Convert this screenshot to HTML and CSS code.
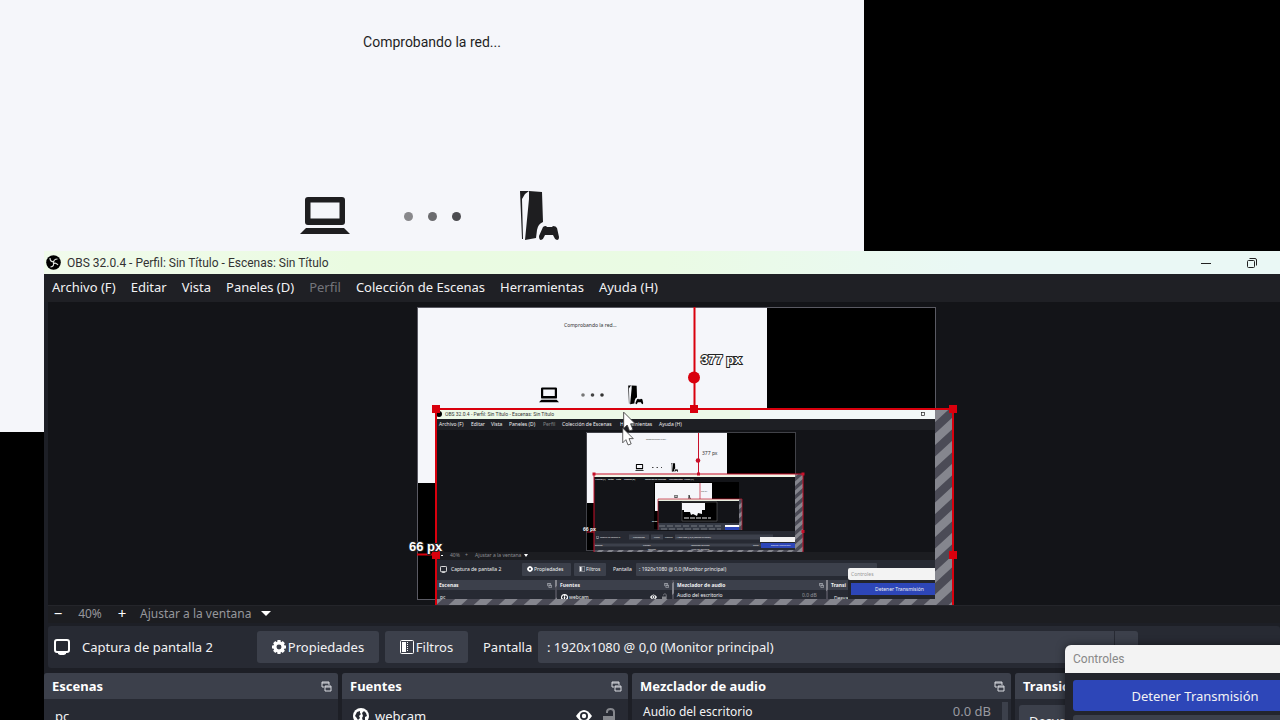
FILE: index.html
```html
<!DOCTYPE html>
<html lang="es">
<head>
<meta charset="utf-8">
<title>OBS 32.0.4</title>
<link rel="stylesheet" href="styles.css">
</head>
<body>
<svg class="defs" aria-hidden="true">
  <defs>
    <symbol id="laptop" viewBox="0 0 50 38">
      <path fill-rule="evenodd" d="M8 0h34q3 0 3 3v22q0 3-3 3H8q-3 0-3-3V3q0-3 3-3zm2.500 5.500v16h29v-16z"/>
      <path d="M6 31h38l6 6H0z"/>
    </symbol>
    <symbol id="console" viewBox="0 0 40 52">
      <path d="M1 1h9L6 4 3 9l1 40H3z"/>
      <path d="M10 1l13 1 1 30q-5 2-6 8l-1 8-11 2L10 9z"/>
      <path d="M24 37q1-1 3-1l1 1h5l1-1q3 0 4 2l2 9q0 3-2 3-2 0-3-3l-1-2h-8l-1 2q-1 3-3 3t-2-4z"/>
    </symbol>
    <symbol id="popout" viewBox="0 0 11 11">
      <path d="M3 6H1V1h7v3M1 2h7M4 5h6v5H4zM4 6h6" fill="none" stroke="#d8dae0"/>
    </symbol>
    <symbol id="monitor" viewBox="0 0 16 16">
      <rect x="1" y="1" width="14" height="12" rx="2" fill="none" stroke="#fff" stroke-width="2"/>
      <path d="M4 14h8v1l-2 1H6l-2-1z" fill="#fff"/>
    </symbol>
    <symbol id="gear" viewBox="0 0 16 16">
      <circle cx="8" cy="8" r="4.700" fill="none" stroke="#fff" stroke-width="3.700"/>
      <path d="M8 0v3M8 13v3M0 8h3M13 8h3M2.500 2.500l2 2M11.500 11.500l2 2M13.500 2.500l-2 2M4.500 11.500l-2 2" stroke="#fff" stroke-width="3.600"/>
    </symbol>
    <symbol id="filters" viewBox="0 0 14 14">
      <rect x=".5" y=".5" width="13" height="13" rx="1" fill="none" stroke="#fff"/>
      <path d="M2 2h4v10H2z" fill="#fff"/>
      <path d="M7.500 2v10" stroke="#fff" stroke-dasharray="1 1"/>
    </symbol>
    <symbol id="globe" viewBox="0 0 16 16">
      <circle cx="8" cy="8" r="8" fill="#fff"/>
      <path d="M2 8l2-4 3-1v2l1 1-2 2 1 2-2 2-2-3zM9 5l2-2 2 2 1 3-2 1v3l-2 1-1-3 1-2z" fill="#272a33"/>
    </symbol>
    <symbol id="eye" viewBox="0 0 16 12">
      <path d="M0 6q8-12 16 0-8 12-16 0z" fill="#fff"/>
      <circle cx="8" cy="6" r="4" fill="#272a33"/><circle cx="8" cy="6" r="2.200" fill="#fff"/>
    </symbol>
    <symbol id="lock" viewBox="0 0 13 16">
      <path d="M4 5V4q0-3 3.500-3T11 4v5" fill="none" stroke="#85878d" stroke-width="2"/>
      <path d="M0 8h12v8H0z" fill="#85878d"/>
    </symbol>
    <symbol id="pointer" viewBox="0 0 12 18">
      <path d="M1 1v14l3-3 2 5 3-1-2-5h4z" fill="#fff" stroke="#444" stroke-width=".8"/>
    </symbol>
    <pattern id="hatch" width="25" height="23" patternUnits="userSpaceOnUse" patternTransform="translate(3 3)">
      <rect width="25" height="23" fill="#4b4b56"/>
      <path d="M0 23L25 0v11.500L12.500 23zM0 0h12.500L0 11.500z" fill="#85868e"/>
    </pattern>
    <pattern id="hatch-small" width="10" height="9" patternUnits="userSpaceOnUse">
      <rect width="10" height="9" fill="#4b4b56"/>
      <path d="M0 9L10 0v4.500L5 9zM0 0h5L0 4.500z" fill="#85868e"/>
    </pattern>
    <clipPath id="canvas-clip"><rect x="418" y="308" width="517" height="291"/></clipPath>
  </defs>
</svg>

<main class="desktop">
  <section class="remote">
    <p class="remote-status">Comprobando la red...</p>
    <div class="remote-link">
      <svg class="laptop"><use href="#laptop"/></svg>
      <div class="dots"><i class="dot dot-a"></i><i class="dot dot-b"></i><i class="dot dot-c"></i></div>
      <svg class="console"><use href="#console"/></svg>
    </div>
  </section>

  <section class="obs">
    <header class="titlebar">
      <svg class="logo" viewBox="0 0 15 15"><circle cx="7.500" cy="7.500" r="7.300" fill="#000"/><path d="M4 3q0 4 4 4M11.500 4q-4 0-4 4M12 10q-2-3-5-1M7.500 7.500q1 4-3 4.500" fill="none" stroke="#dfe3df" stroke-width="1.200"/></svg>
      <h1 class="title">OBS 32.0.4 - Perfil: Sin Título - Escenas: Sin Título</h1>
      <button class="win-btn" aria-label="Minimizar"><svg viewBox="0 0 10 10"><path d="M0 5.500h10" stroke="#222"/></svg></button>
      <button class="win-btn" aria-label="Restaurar"><svg viewBox="0 0 10 10" fill="none" stroke="#222"><rect x=".5" y="2.500" width="7" height="7" rx="1"/><path d="M2.500.5H8q1.500 0 1.500 1.500v5.500"/></svg></button>
    </header>

    <nav class="menu">
      <button>Archivo (F)</button><button>Editar</button><button>Vista</button><button>Paneles (D)</button><button disabled>Perfil</button><button>Colección de Escenas</button><button>Herramientas</button><button>Ayuda (H)</button>
    </nav>

    <div class="preview">
      <svg class="stage" viewBox="400 302 560 303">
        <rect x="417.500" y="307.500" width="518" height="292" fill="#000" stroke="#5a5a63"/>
        <rect x="418" y="308" width="349" height="175" fill="#f5f6fa"/>
        <text class="t5 ink" x="564" y="327">Comprobando la red...</text>
        <use href="#laptop" x="539" y="387" width="20" height="16"/>
        <circle cx="583" cy="395" r="1.800" fill="#777"/><circle cx="592.500" cy="395" r="1.800" fill="#444"/><circle cx="602" cy="395" r="1.800" fill="#333"/>
        <use href="#console" x="627" y="385" width="17" height="20"/>

        <rect x="436" y="409" width="517" height="196" fill="url(#hatch)"/>
        <g clip-path="url(#canvas-clip)">
          <rect x="436" y="410" width="499" height="9" fill="#edf9e8"/>
          <rect x="750" y="410" width="185" height="9" fill="#f2f8f8"/>
          <circle cx="439" cy="414" r="3"/>
          <text class="t5 ink segoe" x="445" y="416">OBS 32.0.4 - Perfil: Sin Título - Escenas: Sin Título</text>
          <rect x="921.500" y="412.500" width="3" height="3" fill="none" stroke="#222" stroke-width=".7"/>
          <rect x="436" y="419" width="499" height="11" fill="#1e1f24"/>
          <g class="t5 pale"><text x="439" y="426">Archivo (F)</text><text x="471" y="426">Editar</text><text x="491" y="426">Vista</text><text x="509" y="426">Paneles (D)</text><text x="543" y="426" opacity=".45">Perfil</text><text x="562" y="426">Colección de Escenas</text><text x="620" y="426">Herramientas</text><text x="659" y="426">Ayuda (H)</text></g>
          <rect x="436" y="430" width="499" height="122" fill="#131418"/>
          <rect x="436" y="552" width="499" height="8" fill="#1c1d21"/>
          <g class="t5 gray"><text x="450" y="557">40%</text><text x="465" y="557">+</text><text x="475" y="557">Ajustar a la ventana</text></g>
          <path d="M524 554h4l-2 3zM441 555h2v1h-2z" fill="#fff"/>
          <rect x="436" y="560" width="499" height="20" fill="#272a33"/>
          <g fill="#3c404b"><rect x="522" y="563" width="49" height="13" rx="1"/><rect x="574" y="563" width="32" height="13" rx="1"/><rect x="636" y="563" width="241" height="13" rx="1"/></g>
          <use href="#monitor" x="440" y="566" width="7" height="7"/>
          <use href="#gear" x="527" y="566" width="6" height="6"/>
          <use href="#filters" x="579" y="566" width="6" height="6"/>
          <g class="t5 pale"><text x="451" y="571">Captura de pantalla 2</text><text x="534" y="571">Propiedades</text><text x="586" y="571">Filtros</text><text x="613" y="571">Pantalla</text><text x="639" y="571">: 1920x1080 @ 0,0 (Monitor principal)</text></g>
          <g fill="#3c404b"><rect x="436" y="580" width="119" height="10"/><rect x="557" y="580" width="115" height="10"/><rect x="674" y="580" width="152" height="10"/><rect x="828" y="580" width="30" height="10"/></g>
          <g fill="#272a33"><rect x="436" y="590" width="119" height="9"/><rect x="557" y="590" width="115" height="9"/><rect x="674" y="590" width="152" height="9"/><rect x="828" y="590" width="30" height="9"/></g>
          <use href="#popout" x="547" y="583" width="5" height="5"/><use href="#popout" x="664" y="583" width="5" height="5"/><use href="#popout" x="819" y="583" width="5" height="5"/>
          <g class="t5 pale bold"><text x="439" y="587">Escenas</text><text x="560" y="587">Fuentes</text><text x="677" y="587">Mezclador de audio</text><text x="831" y="587">Transi</text></g>
          <g class="t5 pale"><text x="440" y="599">pc</text><text x="569" y="599">webcam</text><text x="677" y="597">Audio del escritorio</text><text x="802" y="597" opacity=".5">0.0 dB</text><text x="834" y="600">Desva</text></g>
          <use href="#globe" x="561" y="594" width="7" height="7"/><use href="#eye" x="650" y="594" width="7" height="6"/><use href="#lock" x="662" y="593" width="5" height="7"/>
          <rect x="848" y="568" width="92" height="12" rx="2" fill="#f3f3f3"/><text class="t5" x="851" y="576" fill="#999">Controles</text>
          <rect x="848" y="580" width="92" height="20" fill="#23252c"/><rect x="851" y="583" width="90" height="12" fill="#2d46b8"/><text class="t5 pale" x="875" y="591">Detener Transmisión</text>

          <rect x="586.500" y="432.500" width="209" height="118" fill="#000" stroke="#5a5a63" stroke-width=".7"/>
          <rect x="587" y="433" width="140" height="70" fill="#f5f6fa"/>
          <text class="t2 ink" x="646" y="440">Comprobando la red...</text>
          <use href="#laptop" x="635" y="464" width="9" height="7"/>
          <path d="M652 467.500h10" stroke="#444" stroke-dasharray="1.500 3"/>
          <use href="#console" x="671" y="463" width="7" height="9"/>
          <rect x="594" y="474" width="209" height="78" fill="url(#hatch-small)"/>
          <rect x="594" y="474" width="201" height="3" fill="#f2f6e8"/>
          <rect x="594" y="477" width="201" height="54" fill="#131418"/>
          <g class="t2 pale bold"><text x="595" y="480">Archivo (F)</text><text x="608" y="480">Editar</text><text x="616" y="480">Vista</text><text x="624" y="480">Paneles (D)</text><text x="645" y="480">Colección de Escenas</text><text x="669" y="480">Herramientas</text><text x="684" y="480">Ayuda (H)</text></g>
          <rect x="594" y="531" width="201" height="19" fill="#272a33"/>
          <path d="M629 537h20M651 537h12M675 537h98" stroke="#3c404b" stroke-width="5"/>
          <path d="M594 545h201" stroke="#3c404b" stroke-width="3"/>
          <g class="t2 pale"><text x="600" y="538">Captura de pantalla 2</text><text x="633" y="538">Propiedades</text><text x="654" y="538">Filtros</text><text x="665" y="538">Pantalla</text><text x="676" y="538">: 1920x1080 @ 0,0 (Monitor principal)</text><text x="595" y="546">Escenas</text><text x="643" y="546">Fuentes</text><text x="691" y="546">Mezclador de audio</text><text x="753" y="546">Transi</text><text x="648" y="550">webcam</text><text x="691" y="550">Audio del escritorio</text></g>
          <use href="#monitor" x="596" y="536" width="3" height="3"/>
          <rect x="760" y="537" width="35" height="5" fill="#f3f3f3"/><rect x="761" y="543" width="34" height="5" fill="#2d46b8"/><text class="t2 pale" x="771" y="546">Detener Transmisión</text>

          <path d="M654 482h85v47h-85z" fill="#000"/>
          <path d="M655 483h57v28h-57z" fill="#f5f6fa"/>
          <use href="#laptop" x="674" y="495" width="4" height="3"/><use href="#console" x="688" y="495" width="3" height="4"/>
          <path d="M658 499h84v31h-84z" fill="url(#hatch-small)"/>
          <path d="M658 499h81v2h-81z" fill="#e7eddf"/><path d="M658 501h81v22h-81z" fill="#131418"/><path d="M658 523h81v7h-81z" fill="#343944"/>
          <path d="M659 526h62M661 529h60" stroke="#a6a8af" stroke-width=".6" stroke-dasharray="6 2"/>
          <path d="M725 525h14v2h-14z" fill="#fff"/><path d="M725 527h14v3h-14z" fill="#2d46b8"/>
          <path d="M682 502h35v19h-35z" fill="#000" stroke="#777" stroke-width=".5"/><path d="M682 503h23v7h-3v4l-4-1-1 3-4-2-2 1-1-3h-6v-2h-2z" fill="#f5f6fa"/><path d="M684 518h27" stroke="#777" stroke-width="2" stroke-dasharray="5 1"/>
          <path d="M658 530v-31h84v31M700 499v-16" fill="none" stroke="#c3152b" stroke-width=".7"/>
          <text class="t2 ink" x="701" y="492">377 px</text><text class="t2 pale bold" x="652" y="522">66 px</text>

          <path d="M594 552v-78h209v78M698.500 474v-41" fill="none" stroke="#c8102a"/>
          <circle cx="698" cy="460.500" r="2.300" fill="#c8102a"/>
          <path d="M592.500 472.500h3v3h-3zM697 472.500h3v3h-3zM801.500 472.500h3v3h-3zM801.500 530h3v3h-3z" fill="#c8102a"/>
          <path d="M587 532h7" stroke="#c8102a"/>
          <text class="t5 ink" x="702" y="455">377 px</text>
          <text class="t5 pale bold" x="583" y="531">66 px</text>
        </g>
        <path d="M436 605V409h517v196" fill="none" stroke="#d9000d" stroke-width="2"/>
        <path d="M694.500 307v102M417 554.500h19" stroke="#d9000d" stroke-width="2"/>
        <circle cx="694" cy="377.500" r="6" fill="#d9000d"/>
        <path d="M432 405h8v8h-8zM690 405h8v8h-8zM949 405h8v8h-8zM432 551h8v8h-8zM949 551h8v8h-8z" fill="#d9000d"/>
        <text class="measure" x="701" y="364">377 px</text>
        <text class="measure" x="409" y="551">66 px</text>
        <use href="#pointer" x="621" y="427" width="14" height="19"/>
        <use href="#pointer" x="622" y="411" width="15" height="21"/>
      </svg>
    </div>

    <div class="zoombar">
      <button class="zoom-btn" aria-label="Alejar">−</button><span class="zoom-value">40%</span><button class="zoom-btn" aria-label="Acercar">+</button>
      <button class="zoom-fit">Ajustar a la ventana<i class="caret"></i></button>
    </div>

    <div class="context">
      <svg class="ico16"><use href="#monitor"/></svg>
      <span class="source-name">Captura de pantalla 2</span>
      <button class="tool props"><svg class="ico14"><use href="#gear"/></svg>Propiedades</button>
      <button class="tool filters"><svg class="ico14"><use href="#filters"/></svg>Filtros</button>
      <label class="screen-label" for="screen">Pantalla</label>
      <select class="screen" id="screen"><option>: 1920x1080 @ 0,0 (Monitor principal)</option></select>
    </div>

    <div class="docks">
      <section class="dock"><h2 class="dock-head">Escenas<svg class="popout"><use href="#popout"/></svg></h2><div class="row scene">pc</div></section>
      <section class="dock"><h2 class="dock-head">Fuentes<svg class="popout"><use href="#popout"/></svg></h2><div class="row"><svg class="ico16"><use href="#globe"/></svg><span class="grow">webcam</span><svg class="eye"><use href="#eye"/></svg><svg class="lock"><use href="#lock"/></svg></div></section>
      <section class="dock"><h2 class="dock-head">Mezclador de audio<svg class="popout"><use href="#popout"/></svg></h2><div class="mixer"><span class="grow">Audio del escritorio</span><span class="db">0.0 dB</span><i class="scroll"></i></div></section>
      <section class="dock"><h2 class="dock-head">Transiciones</h2><button class="transition">Desvanecimiento</button></section>
    </div>
  </section>

  <section class="controls">
    <h2 class="controls-title">Controles</h2>
    <div class="controls-body"><button class="stop">Detener Transmisión</button><button class="next" aria-label="Iniciar grabación"></button></div>
  </section>
</main>
</body>
</html>
```
FILE: styles.css
```css
* { box-sizing: border-box; }
body { margin: 0; background: #000; overflow: hidden; font-family: "Noto Sans", "Open Sans", sans-serif; font-size: 13px; color: #f2f2f4; }
h1, h2, p { margin: 0; font-weight: 400; }
button, select { font: inherit; color: inherit; border: 0; padding: 0; background: none; }
svg { flex: none; display: block; }
.defs { position: absolute; width: 0; height: 0; }
.desktop { position: relative; height: 100vh; overflow: hidden; }

.remote { position: absolute; left: 0; top: 0; width: 864px; height: 432px; padding-top: 32px; background: #f5f6fa; color: #1f1f1f; display: flex; flex-direction: column; align-items: center; gap: 138px; }
.remote-status { font-family: Roboto, sans-serif; font-size: 14px; line-height: 20px; }
.remote-link { display: flex; align-items: center; gap: 54px; fill: #1e1e20; padding-right: 6px; }
.laptop { width: 50px; height: 38px; }
.console { width: 40px; height: 52px; margin-left: 4px; }
.dots { display: flex; gap: 15px; }
.dot { width: 9px; height: 9px; border-radius: 50%; background: #88888b; }
.dot-b { background: #6b6b6e; }
.dot-c { background: #4c4c50; }

.obs { position: absolute; left: 44px; top: 251px; right: 0; bottom: 0; background: #1d1f26; display: flex; flex-direction: column; overflow: hidden; }
.titlebar { flex: none; height: 23px; display: flex; align-items: center; padding: 0 23px 0 2px; background: linear-gradient(90deg, #f1fbec, #eafbe1 25%, #eafbe4 50%, #eaf8f5 75%); color: #333; }
.logo { width: 15px; height: 15px; margin-right: 6px; }
.title { flex: 1; font-family: Roboto, sans-serif; font-size: 12px; }
.win-btn { width: 10px; height: 10px; margin-left: 36px; }
.menu { flex: none; height: 28px; padding: 0 8px 2px; display: flex; align-items: center; gap: 15px; background: #1f2025; }
.menu button:disabled { color: #74757b; }
.preview { flex: none; margin-left: 4px; background: #131418; overflow: hidden; }
.stage { width: 560px; height: 303px; margin-left: 352px; }
.t2 { font-size: 2px; }
.t5 { font-size: 5px; }
.segoe { font-family: Roboto, sans-serif; }
.ink { fill: #333; }
.pale { fill: #f0f0f2; }
.gray { fill: #8c8d92; }
.bold { font-weight: 700; }
.measure { font: 700 13px "Liberation Sans", sans-serif; fill: #fff; stroke: #222; stroke-width: 2px; paint-order: stroke; }

.zoombar { flex: none; height: 18px; margin-left: 4px; padding-bottom: 2px; display: flex; align-items: center; background: #1c1d21; border-top: 1px solid #24252a; font-size: 12px; line-height: 15px; color: #96979c; }
.zoom-btn { width: 20px; font-size: 15px; line-height: 15px; color: #fff; }
.zoom-value { width: 44px; text-align: center; }
.zoom-fit { margin-left: 8px; display: flex; align-items: center; gap: 10px; }
.caret { margin-left: 0; border: 5px solid transparent; border-top-color: #fff; border-bottom: 0; }

.context { flex: none; margin: 3px 0 5px 4px; height: 42px; padding: 0 6px; display: flex; align-items: center; background: #272a33; border-radius: 3px; }
.ico16 { width: 16px; height: 16px; }
.ico14 { width: 14px; height: 14px; }
.source-name { width: 163px; margin-left: 12px; margin-right: 12px; }
.tool { height: 32px; border-radius: 3px; background: #3c404b; display: flex; align-items: center; justify-content: center; gap: 2px; }
.props { width: 122px; }
.filters { width: 83px; margin-left: 6px; }
.screen-label { margin-left: 15px; width: 55px; }
.screen { appearance: none; width: 600px; height: 32px; padding: 0 9px; border-radius: 3px; background: linear-gradient(90deg, transparent 576px, #272a33 576px, #272a33 577px, transparent 577px) #3c404b; }

.docks { flex: 1; display: grid; grid-template-columns: 294px 286px 379px 1fr; gap: 4px; }
.dock { background: #272a33; border-radius: 3px 3px 0 0; overflow: hidden; }
.dock-head { height: 26px; padding: 0 6px 0 8px; display: flex; align-items: center; justify-content: space-between; background: #3c404b; font-size: 13px; font-weight: 700; color: #fff; }
.popout { width: 11px; height: 11px; }
.row { display: flex; align-items: center; height: 34px; padding: 0 12px 0 11px; gap: 6px; }
.grow { flex: 1; }
.eye { width: 16px; height: 12px; }
.lock { width: 13px; height: 16px; margin-left: 5px; }
.mixer { display: flex; padding: 3px 3px 0 11px; font-size: 12px; line-height: 19px; }
.db { font-size: 13px; color: #999aa0; }
.scroll { width: 6px; height: 24px; margin-left: 11px; background: #3c404b; }
.transition { display: block; margin: 6px 4px; width: 240px; height: 32px; padding-left: 10px; text-align: left; border-radius: 3px; background: #3c404b; }

.controls { position: absolute; left: 1065px; top: 645px; width: 260px; height: 120px; border-radius: 6px 6px 0 0; overflow: hidden; background: #23252d; box-shadow: 0 0 8px rgba(0, 0, 0, .5); }
.controls-title { height: 28px; padding-left: 8px; line-height: 28px; font-family: Roboto, sans-serif; font-size: 12px; background: #f3f3f3; color: #888; }
.controls-body { display: flex; flex-direction: column; gap: 4px; padding: 7px 8px; }
.stop { height: 31px; border-radius: 3px; background: #2d46b8; }
.next { height: 31px; border-radius: 3px; background: #3c404b; }
```
